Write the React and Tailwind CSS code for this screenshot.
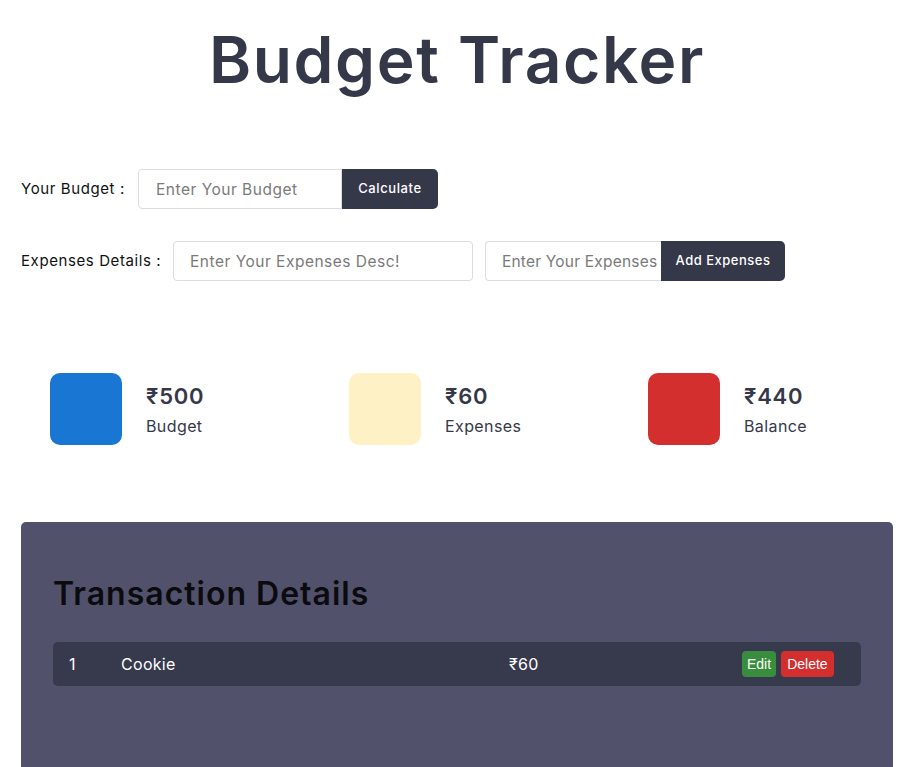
import { useState } from 'react';

const font = { fontFamily: 'Inter, "Noto Sans", "DejaVu Sans", sans-serif' };

export default function App() {
  const [budget, setBudget] = useState(500);
  const [items] = useState([{ id: 1, desc: 'Cookie', amount: 60 }]);
  const expenses = items.reduce((s, i) => s + i.amount, 0);

  return (
    <div className="min-h-screen bg-white pl-[21px] pr-[22px] text-[#353849]" style={font}>
      {/* title */}
      <h1 className="pt-[20px] text-center text-[64px] font-semibold leading-[80px] tracking-[1.6px] text-[#353849]">
        Budget Tracker
      </h1>

      {/* forms */}
      <div className="mt-[69px] flex items-center">
        <span className="w-[117px] shrink-0 text-[15px] tracking-[0.6px] text-[#111]">Your Budget :</span>
        <input
          placeholder="Enter Your Budget"
          className="h-[40px] w-[204px] rounded-l-[4px] border border-[#dddddd] px-[17px] text-[15.5px] tracking-[0.5px] text-[#555] outline-none placeholder:text-[#7a7a7a]"
        />
        <button
          onClick={() => setBudget(budget)}
          className="h-[40px] w-[96px] rounded-r-[5px] bg-[#353849] text-[13px] font-medium tracking-[0.6px] text-white"
        >
          Calculate
        </button>
      </div>

      <div className="mt-[32px] flex items-center">
        <span className="w-[152px] shrink-0 text-[15px] tracking-[0.6px] text-[#111]">Expenses Details :</span>
        <input
          placeholder="Enter Your Expenses Desc!"
          className="h-[40px] w-[300px] rounded-[4px] border border-[#dddddd] px-[16px] text-[15.5px] tracking-[0.5px] outline-none placeholder:text-[#7a7a7a]"
        />
        <input
          placeholder="Enter Your Expenses"
          className="ml-[12px] h-[40px] w-[176px] rounded-l-[4px] border border-r-0 border-[#dddddd] pl-[16px] pr-0 text-[15.5px] tracking-[0.2px] outline-none placeholder:text-[#7a7a7a]"
        />
        <button className="h-[40px] w-[124px] rounded-r-[5px] bg-[#353849] text-[13px] font-medium tracking-[0.5px] text-white">
          Add Expenses
        </button>
      </div>

      {/* summary */}
      <div className="mt-[92px] flex pl-[29px]">
        {[
          { color: 'bg-[#1976d2]', value: budget, label: 'Budget' },
          { color: 'bg-[#fff1c6]', value: expenses, label: 'Expenses' },
          { color: 'bg-[#d32f2f]', value: budget - expenses, label: 'Balance' },
        ].map((c) => (
          <div key={c.label} className="flex w-[299px] shrink-0 items-center gap-[24px]">
            <div className={`h-[72px] w-[72px] rounded-[10px] ${c.color}`} />
            <div className="flex flex-col">
              <span className="text-[22px] font-semibold leading-[28px] tracking-[0.8px] text-[#353849]">₹{c.value}</span>
              <span className="mt-[5px] text-[16px] leading-[22px] tracking-[0.4px] text-[#353849]">{c.label}</span>
            </div>
          </div>
        ))}
      </div>

      {/* transactions */}
      <div className="mt-[77px] h-[260px] rounded-t-[5px] bg-[#51516b] px-[32px] pt-[52px]">
        <h2 className="text-[32px] font-semibold leading-[40px] tracking-[1px] text-[#0b0b0f]">Transaction Details</h2>
        <div className="mt-[28px] flex h-[44px] items-center rounded-[5px] bg-[#373a4c] px-[16px] text-[16px] tracking-[0.3px] text-white">
          <span className="w-[52px]">{items[0].id}</span>
          <span className="w-[388px]">{items[0].desc}</span>
          <span className="w-[233px]">₹{items[0].amount}</span>
          <div className="flex gap-[5px]" style={{ fontFamily: '"Liberation Sans", Arial, sans-serif' }}>
            <button className="h-[26px] rounded-[4px] bg-[#388e3c] px-[5px] text-[14px] tracking-normal text-white">Edit</button>
            <button className="h-[26px] rounded-[4px] bg-[#d32f2f] px-[6px] text-[14px] tracking-normal text-white">Delete</button>
          </div>
        </div>
      </div>
    </div>
  );
}
